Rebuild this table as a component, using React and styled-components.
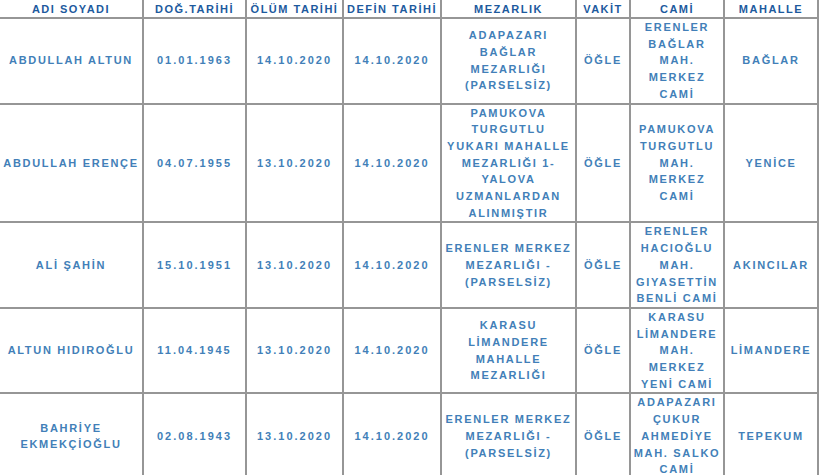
import React from "react";
import styled, { createGlobalStyle } from "styled-components";

const GlobalStyle = createGlobalStyle`
  html, body {
    margin: 0;
    padding: 0;
    background: #ffffff;
    overflow: hidden;
  }
`;

const Page = styled.div`
  width: 820px;
  height: 475px;
  overflow: hidden;
  background: #fff;
`;

const Table = styled.table`
  width: 818px;
  table-layout: fixed;
  border-collapse: collapse;
  font-family: "Liberation Sans", Arial, sans-serif;
  font-weight: 700;
  font-size: 11px;
`;

const Col = styled.col`
  width: ${(p) => p.$w}px;
`;

const Head = styled.th`
  height: 17px;
  padding: 0;
  color: #1d5a9e;
  letter-spacing: 1.5px;
  line-height: 16px;
  text-align: center;
  white-space: nowrap;
  border-left: 2px solid #969696;
  border-bottom: 2px solid #969696;
  &:first-child {
    border-left: none;
  }
  &:last-child {
    border-right: 2px solid #969696;
  }
`;

const Cell = styled.td`
  padding: 0;
  color: #427fb8;
  letter-spacing: ${(p) => (p.$digits ? "2px" : "1.7px")};
  line-height: 16.7px;
  text-align: center;
  vertical-align: middle;
  border-left: 2px solid #969696;
  border-bottom: 2px solid #969696;
  &:first-child {
    border-left: none;
  }
  &:last-child {
    border-right: 2px solid #969696;
  }
`;

const Line = styled.div`
  white-space: nowrap;
`;

const columns = [
  { title: "ADI SOYADI", w: 143 },
  { title: "DOĞ.TARİHİ", w: 103 },
  { title: "ÖLÜM TARİHİ", w: 97 },
  { title: "DEFİN TARİHİ", w: 98 },
  { title: "MEZARLIK", w: 135 },
  { title: "VAKİT", w: 54 },
  { title: "CAMİ", w: 94 },
  { title: "MAHALLE", w: 94 },
];

const rows = [
  [
    ["ABDULLAH ALTUN"],
    ["01.01.1963"],
    ["14.10.2020"],
    ["14.10.2020"],
    ["ADAPAZARI", "BAĞLAR", "MEZARLIĞI", "(PARSELSİZ)"],
    ["ÖĞLE"],
    ["ERENLER", "BAĞLAR", "MAH.", "MERKEZ", "CAMİ"],
    ["BAĞLAR"],
  ],
  [
    ["ABDULLAH ERENÇE"],
    ["04.07.1955"],
    ["13.10.2020"],
    ["14.10.2020"],
    ["PAMUKOVA", "TURGUTLU", "YUKARI MAHALLE", "MEZARLIĞI 1-", "YALOVA", "UZMANLARDAN", "ALINMIŞTIR"],
    ["ÖĞLE"],
    ["PAMUKOVA", "TURGUTLU", "MAH.", "MERKEZ", "CAMİ"],
    ["YENİCE"],
  ],
  [
    ["ALİ ŞAHİN"],
    ["15.10.1951"],
    ["13.10.2020"],
    ["14.10.2020"],
    ["ERENLER MERKEZ", "MEZARLIĞI -", "(PARSELSİZ)"],
    ["ÖĞLE"],
    ["ERENLER", "HACIOĞLU", "MAH.", "GIYASETTİN", "BENLİ CAMİ"],
    ["AKINCILAR"],
  ],
  [
    ["ALTUN HIDIROĞLU"],
    ["11.04.1945"],
    ["13.10.2020"],
    ["14.10.2020"],
    ["KARASU", "LİMANDERE", "MAHALLE", "MEZARLIĞI"],
    ["ÖĞLE"],
    ["KARASU", "LİMANDERE", "MAH.", "MERKEZ", "YENİ CAMİ"],
    ["LİMANDERE"],
  ],
  [
    ["BAHRİYE", "EKMEKÇİOĞLU"],
    ["02.08.1943"],
    ["13.10.2020"],
    ["14.10.2020"],
    ["ERENLER MERKEZ", "MEZARLIĞI -", "(PARSELSİZ)"],
    ["ÖĞLE"],
    ["ADAPAZARI", "ÇUKUR", "AHMEDİYE", "MAH. SALKO", "CAMİ"],
    ["TEPEKUM"],
  ],
];

export default function App() {
  return (
    <Page>
      <GlobalStyle />
      <Table>
        <colgroup>
          {columns.map((c) => (
            <Col key={c.title} $w={c.w} />
          ))}
        </colgroup>
        <thead>
          <tr>
            {columns.map((c) => (
              <Head key={c.title}>{c.title}</Head>
            ))}
          </tr>
        </thead>
        <tbody>
          {rows.map((row, i) => (
            <tr key={i}>
              {row.map((lines, j) => (
                <Cell key={j} $digits={j >= 1 && j <= 3}>
                  {lines.map((l) => (
                    <Line key={l}>{l}</Line>
                  ))}
                </Cell>
              ))}
            </tr>
          ))}
        </tbody>
      </Table>
    </Page>
  );
}
